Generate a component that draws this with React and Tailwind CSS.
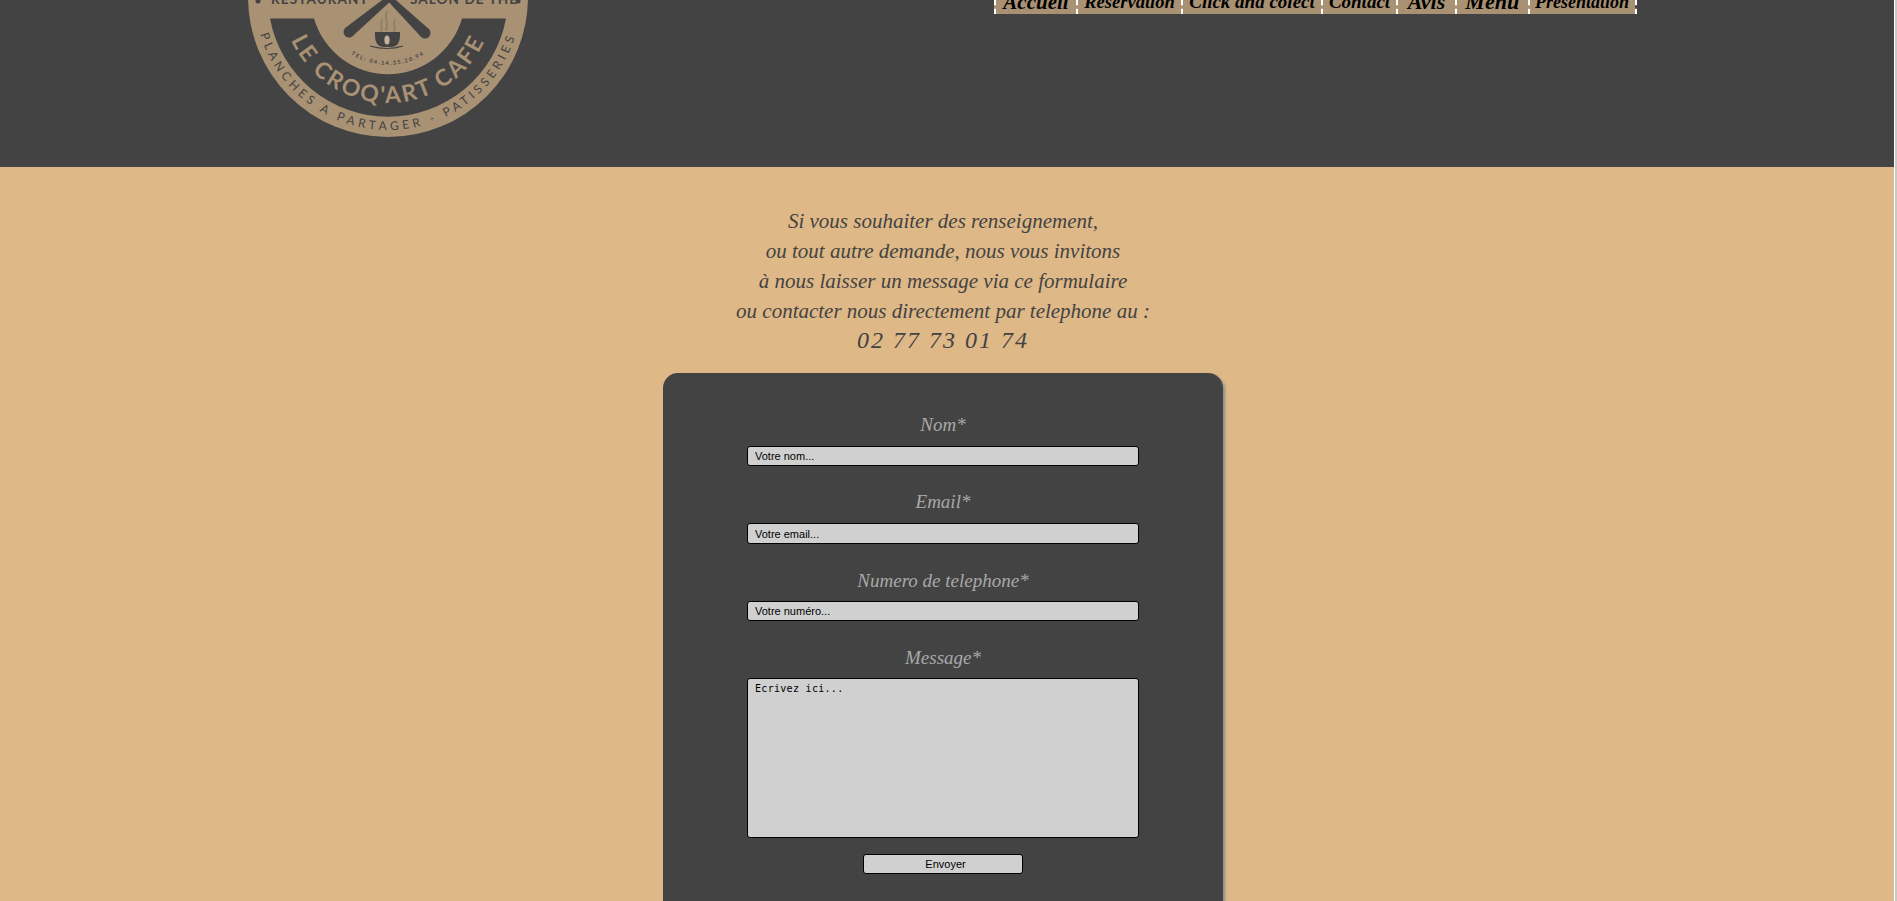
import React from 'react';

const navItems = [
  { label: 'Accueil', width: 'w-[82px]', size: 'text-[21px]' },
  { label: 'Reservation', width: 'w-[105px]', size: 'text-[18.5px]' },
  { label: 'Click and colect', width: 'w-[140px]', size: 'text-[19px]' },
  { label: 'Contact', width: 'w-[75px]', size: 'text-[19px]' },
  { label: 'Avis', width: 'w-[59px]', size: 'text-[22px]' },
  { label: 'Menu', width: 'w-[72.5px]', size: 'text-[22px]' },
  { label: 'Presentation', width: 'w-[107px]', size: 'text-[18px]' },
];

function Logo() {
  const tan = '#a99174';
  const dark = '#434343';
  return (
    <svg className="ml-[248px] h-[137px] w-[280px] shrink-0" viewBox="0 0 280 137">
      <defs>
        <path id="arc-outer" d="M7 -3 A133 133 0 0 0 273 -3" />
        <path id="arc-band" d="M34 -3 A106 106 0 0 0 246 -3" />
        <path id="arc-tel" d="M72 -3 A68 68 0 0 0 208 -3" />
      </defs>
      <circle cx="140" cy="-3" r="140" fill={tan} />
      <path d="M22 18.5 A120 120 0 0 0 258 18.5 L214 18.5 A77 77 0 0 1 66 18.5 Z" fill={dark} />
      <g fontFamily="Lato, sans-serif" textAnchor="middle">
        <text fontSize="23" fontWeight="700" fill={tan} letterSpacing="2.3">
          <textPath href="#arc-band" startOffset="50%">LE CROQ'ART CAFE</textPath>
        </text>
        <text fontSize="12" fontWeight="400" fill={dark} letterSpacing="3.9">
          <textPath href="#arc-outer" startOffset="50%">PLANCHES A PARTAGER - PATISSERIES</textPath>
        </text>
        <text fontSize="5.5" fontWeight="700" fill={dark} letterSpacing="1.5">
          <textPath href="#arc-tel" startOffset="50%">TEL: 04.14.35.20.94</textPath>
        </text>
      </g>
      <g fontFamily="Lato, sans-serif" fontWeight="700" fontSize="13.5" fill={dark} letterSpacing="1.1">
        <text x="23" y="4">RESTAURANT</text>
        <text x="162" y="4">SALON DE THE</text>
      </g>
      <circle cx="10" cy="1" r="2.5" fill={dark} />
      <circle cx="270" cy="1" r="2.5" fill={dark} />
      {/* couverts */}
      <path d="M97.5 27.8 L140.1 -4.5 L143.9 0.1 L104.5 36.2 Z" fill={dark} />
      <circle cx="101" cy="32" r="5.5" fill={dark} />
      <path d="M180.8 29 L142 -5.1 L138 -0.9 L173.2 37 Z" fill={dark} />
      <circle cx="177" cy="33" r="5.5" fill={dark} />
      {/* tasse */}
      <g fill="none" stroke="#8f7e68" strokeWidth="1.8" strokeLinecap="round">
        <path d="M134 20 C131 24 136 27 133 31" />
        <path d="M139 12 C135 18 142 23 138 30" />
        <path d="M147 20 C144 24 149 27 146 31" />
      </g>
      <path d="M127 32 H152 V36 Q152 46 144 47 H135 Q127 46 127 36 Z" fill={dark} />
      <ellipse cx="139" cy="40" rx="2.6" ry="4.5" fill="#c4b39c" />
      <path d="M122 46 Q139 51 155 46" fill="none" stroke={dark} strokeWidth="1.2" />
    </svg>
  );
}

function Nav() {
  return (
    <ul className="ml-[466px] flex h-[14px] overflow-hidden border-r-2 border-dashed border-white">
      {navItems.map((item) => (
        <li
          key={item.label}
          className={`${item.width} flex h-[14px] items-end justify-center overflow-hidden border-l-2 border-dashed border-white bg-[#a99174]`}
        >
          <a className={`${item.size} whitespace-nowrap font-['Liberation_Serif',serif] font-bold leading-[24px] text-black italic`}>
            {item.label}
          </a>
        </li>
      ))}
    </ul>
  );
}

function Field({ label, labelClass, children }) {
  return (
    <div className={labelClass}>
      <label className="flex h-[30px] items-center justify-center font-['Liberation_Serif',serif] text-[19px] text-[#a9a9a9] italic">
        {label}
      </label>
      {children}
    </div>
  );
}

const inputClass =
  "block w-[392px] rounded-[3px] border border-black bg-[#d0d0d0] pl-[7px] font-['Liberation_Sans',sans-serif] text-[11px] text-black outline-none placeholder:text-black";

export default function App() {
  return (
    <div className="flex h-[901px] w-full overflow-hidden bg-[#c8c8c8]">
      <div className="h-[901px] w-[1894px] shrink-0 overflow-hidden bg-[#deb887]">
        <header className="flex h-[167px] items-start bg-[#434343]">
          <Logo />
          <Nav />
        </header>

        <main className="ml-[663px] w-[560px]">
          <div className="mt-[39px] text-center font-['Liberation_Serif',serif] text-[21px] leading-[30px] text-[#434343] italic">
            <p>Si vous souhaiter des renseignement,</p>
            <p>ou tout autre demande, nous vous invitons</p>
            <p>à nous laisser un message via ce formulaire</p>
            <p>ou contacter nous directement par telephone au :</p>
            <p className="text-[24px] leading-[28px] tracking-[2px]">02 77 73 01 74</p>
          </div>

          <form className="mt-[19px] flex h-[600px] flex-col items-center rounded-[15px] bg-[#434343] pt-[37px] shadow-[2px_2px_3px_#8a8a8a]">
            <Field label="Nom*">
              <input className={`${inputClass} mt-[6px] h-[20px]`} placeholder="Votre nom..." />
            </Field>
            <Field label="Email*" labelClass="mt-[21px]">
              <input className={`${inputClass} mt-[6px] h-[21px]`} placeholder="Votre email..." />
            </Field>
            <Field label="Numero de telephone*" labelClass="mt-[22px]">
              <input className={`${inputClass} mt-[5px] h-[20px]`} placeholder="Votre numéro..." />
            </Field>
            <Field label="Message*" labelClass="mt-[22px]">
              <textarea
                className="mt-[5px] block h-[160px] w-[392px] resize-none rounded-[3px] border border-black bg-[#d0d0d0] px-[7px] py-[2px] font-['DejaVu_Sans_Mono',monospace] text-[10px] tracking-[0.3px] text-black outline-none placeholder:text-black"
                placeholder="Ecrivez ici..."
              />
            </Field>
            <button
              type="button"
              className="mt-[16px] h-[20px] w-[160px] rounded-[3px] border border-black bg-[#d0d0d0] pl-[5px] font-['Liberation_Sans',sans-serif] text-[11px] text-black"
            >
              Envoyer
            </button>
          </form>
        </main>
      </div>
      <div className="h-[901px] w-px shrink-0 bg-white" />
    </div>
  );
}
